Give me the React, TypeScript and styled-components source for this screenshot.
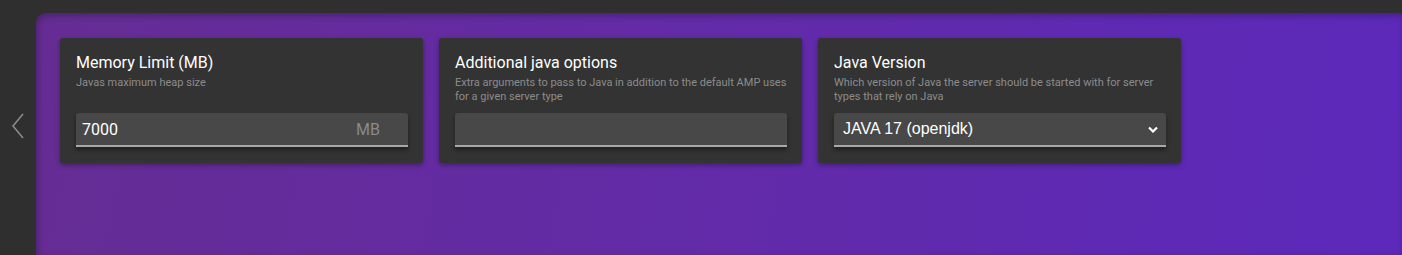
import styled, { createGlobalStyle } from "styled-components";

const GlobalStyle = createGlobalStyle`
    html, body {
        margin: 0;
        padding: 0;
        background: #2f2f2f;
        font-family: Roboto, "Liberation Sans", sans-serif;
    }
`;

const Shell = styled.div`
    width: 1402px;
    height: 255px;
    display: flex;
    flex-direction: column;
    background: #2f2f2f;
    overflow: hidden;
`;

const TopBar = styled.div`
    height: 13px;
    flex-shrink: 0;
    background: #2f2f2f;
`;

const Body = styled.div`
    flex: 1;
    display: flex;
`;

const Sidebar = styled.div`
    width: 36px;
    flex-shrink: 0;
    display: flex;
    justify-content: center;
    padding-top: 100px;
    box-sizing: border-box;
    color: #8a8a8a;
`;

const Content = styled.div`
    flex: 1;
    border-top-left-radius: 10px;
    background: linear-gradient(100deg, #652d93 0%, #632ba6 45%, #5c29bb 100%);
    box-shadow: inset 2px 3px 6px rgba(0, 0, 0, 0.25);
    padding: 25px 24px;
    display: flex;
    align-items: flex-start;
    gap: 16px;
`;

const Card = styled.div`
    width: 363px;
    box-sizing: border-box;
    background: #333333;
    border-radius: 3px;
    box-shadow: 0 2px 5px rgba(0, 0, 0, 0.35);
    padding: 15px 15px 16px 16px;
`;

const Title = styled.div`
    color: #ffffff;
    font-size: 16px;
    line-height: 20px;
    margin-bottom: 3px;
`;

const Description = styled.div`
    color: #8c8c8c;
    font-size: 11px;
    line-height: 14px;
    min-height: 28px;
    margin-bottom: 9px;
    margin-right: -4px;
`;

const FieldBox = styled.div`
    height: 34px;
    background: #484848;
    border-radius: 3px 3px 0 0;
    border-bottom: 2px solid #a8a8a8;
    box-shadow: 0 3px 4px rgba(0, 0, 0, 0.4);
    display: flex;
    align-items: center;
    box-sizing: border-box;
    padding: 0 28px 0 6px;
`;

const Value = styled.span<{ $select?: boolean }>`
    flex: 1;
    color: #ffffff;
    font-size: 16px;
    font-family: ${(p) => (p.$select ? '"Liberation Sans", Arial, sans-serif' : 'Roboto, sans-serif')};
    padding-left: ${(p) => (p.$select ? "3px" : "0")};
`;

const Unit = styled.span`
    color: #8a8a8a;
    font-size: 16px;
`;

const Chevron = styled.span`
    display: flex;
    margin-right: -20px;
    color: #ffffff;
`;

const ArrowLeft = () => (
    <svg width="14" height="26" viewBox="0 0 14 26" fill="none" stroke="currentColor" strokeWidth="1.6">
        <path d="M12 1 L2 13 L12 25" />
    </svg>
);

const ChevronDown = () => (
    <svg width="10" height="7" viewBox="0 0 10 7" fill="none" stroke="currentColor" strokeWidth="2.2">
        <path d="M1 1.5 L5 5.5 L9 1.5" />
    </svg>
);

const App = () => {
    return (
        <Shell>
            <GlobalStyle />
            <TopBar />
            <Body>
                <Sidebar>
                    <ArrowLeft />
                </Sidebar>
                <Content>
                    <Card>
                        <Title>Memory Limit (MB)</Title>
                        <Description>Javas maximum heap size</Description>
                        <FieldBox>
                            <Value>7000</Value>
                            <Unit>MB</Unit>
                        </FieldBox>
                    </Card>
                    <Card>
                        <Title>Additional java options</Title>
                        <Description>Extra arguments to pass to Java in addition to the default AMP uses for a given server type</Description>
                        <FieldBox />
                    </Card>
                    <Card>
                        <Title>Java Version</Title>
                        <Description>Which version of Java the server should be started with for server types that rely on Java</Description>
                        <FieldBox>
                            <Value $select>JAVA 17 (openjdk)</Value>
                            <Chevron>
                                <ChevronDown />
                            </Chevron>
                        </FieldBox>
                    </Card>
                </Content>
            </Body>
        </Shell>
    );
};

export default App;
